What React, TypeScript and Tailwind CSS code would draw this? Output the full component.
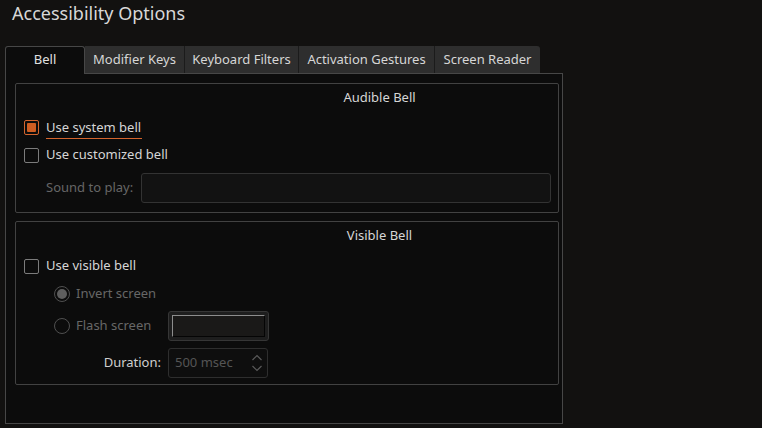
import React from "react";

function CheckBox({ checked }: { checked?: boolean }) {
  if (checked) {
    return (
      <div className="w-[15px] h-[15px] rounded-[2px] border border-[#d4652e] flex items-center justify-center shrink-0">
        <div className="w-[9px] h-[9px] bg-[#cf5d22] rounded-[1px]" />
      </div>
    );
  }
  return <div className="w-[15px] h-[15px] rounded-[2px] border border-[#7c7c7c] shrink-0" />;
}

function Radio({ checked }: { checked?: boolean }) {
  return (
    <div className="w-[16px] h-[16px] rounded-full border border-[#505050] flex items-center justify-center shrink-0">
      {checked && <div className="w-[10px] h-[10px] rounded-full bg-[#5e5e5e]" />}
    </div>
  );
}

export default function App() {
  return (
    <div
      className="w-[762px] h-[428px] bg-[#121110] text-[#d6d6d6] overflow-hidden"
      style={{ fontFamily: "'Noto Sans', 'Open Sans', sans-serif" }}
    >
      <div className="h-[26px] pl-[12px] text-[18px] leading-[26px] text-[#d8d8d8]">Accessibility Options</div>

      {/* Tabs */}
      <div className="mt-[20px] ml-[5px] flex h-[27px] text-[13px]">
        <div className="relative z-10 w-[80px] h-[28px] border border-b-0 border-[#474747] rounded-t-[3px] bg-[#0c0c0c] flex items-center justify-center text-[#e0e0e0] pb-[1px]">
          Bell
        </div>
        <div className="w-[100px] bg-[#2e2e2e] border-r border-[#1b1b1b] flex items-center justify-center">
          Modifier Keys
        </div>
        <div className="w-[114px] bg-[#2e2e2e] border-r border-[#1b1b1b] flex items-center justify-center">
          Keyboard Filters
        </div>
        <div className="w-[136px] bg-[#2e2e2e] border-r border-[#1b1b1b] flex items-center justify-center">
          Activation Gestures
        </div>
        <div className="w-[105px] bg-[#2e2e2e] rounded-tr-[3px] flex items-center justify-center">
          Screen Reader
        </div>
      </div>

      {/* Panel */}
      <div className="ml-[5px] w-[558px] h-[351px] border border-[#474747] bg-[#0c0c0c] pt-[9px] pl-[9px] text-[13px]">
        {/* Audible Bell */}
        <div className="w-[544px] h-[130px] border border-[#424242] rounded-[2px]">
          <div className="h-[28px] flex items-center">
            <div className="ml-[303px] w-[121px] text-center">Audible Bell</div>
          </div>
          <div className="mt-[1px] h-[28px] flex items-center pl-[8px]">
            <CheckBox checked />
            <div className="ml-[7px] relative leading-[18px]">
              Use system bell
              <div className="absolute left-0 right-[-1px] bottom-[-3px] h-[1px] bg-[#d4652e]" />
            </div>
          </div>
          <div className="h-[28px] flex items-center pl-[8px]">
            <CheckBox />
            <div className="ml-[7px]">Use customized bell</div>
          </div>
          <div className="mt-[4px] h-[30px] flex items-center pl-[30px]">
            <div className="w-[95px] text-[#666666]">Sound to play:</div>
            <div className="w-[410px] h-[30px] border border-[#333333] bg-[#121212] rounded-[3px]" />
          </div>
        </div>

        {/* Visible Bell */}
        <div className="mt-[8px] w-[544px] h-[164px] border border-[#424242] rounded-[2px]">
          <div className="h-[28px] flex items-center">
            <div className="ml-[303px] w-[121px] text-center">Visible Bell</div>
          </div>
          <div className="mt-[2px] h-[28px] flex items-center pl-[8px]">
            <CheckBox />
            <div className="ml-[7px]">Use visible bell</div>
          </div>
          <div className="h-[28px] flex items-center pl-[38px]">
            <Radio checked />
            <div className="ml-[6px] text-[#676767]">Invert screen</div>
          </div>
          <div className="mt-[3px] h-[30px] flex items-center pl-[38px]">
            <div className="w-[114px] flex items-center">
              <Radio />
              <div className="ml-[6px] text-[#676767]">Flash screen</div>
            </div>
            <div className="w-[101px] h-[30px] rounded-[3px] border border-[#363636] bg-[#1e1e1e] p-[3px]">
              <div className="w-full h-full bg-[#1a1918] border-t border-l border-[#8d8d8d] border-b border-r border-b-[#050505] border-r-[#050505]" />
            </div>
          </div>
          <div className="mt-[7px] h-[30px] flex items-center">
            <div className="w-[145px] text-right text-[#cfcfcf]">Duration:</div>
            <div className="ml-[7px] w-[100px] h-[30px] rounded-[3px] border border-[#2e2e2e] bg-[#0e0e0e] flex items-center pl-[6px] pr-[4px]">
              <div className="flex-1 text-[#555555]">500 msec</div>
              <svg width="12" height="22" viewBox="0 0 12 22" className="shrink-0">
                <path d="M1.5 8 L6 3.5 L10.5 8" fill="none" stroke="#5a5a5a" strokeWidth="1.2" />
                <path d="M1.5 14 L6 18.5 L10.5 14" fill="none" stroke="#5a5a5a" strokeWidth="1.2" />
              </svg>
            </div>
          </div>
        </div>
      </div>
    </div>
  );
}
